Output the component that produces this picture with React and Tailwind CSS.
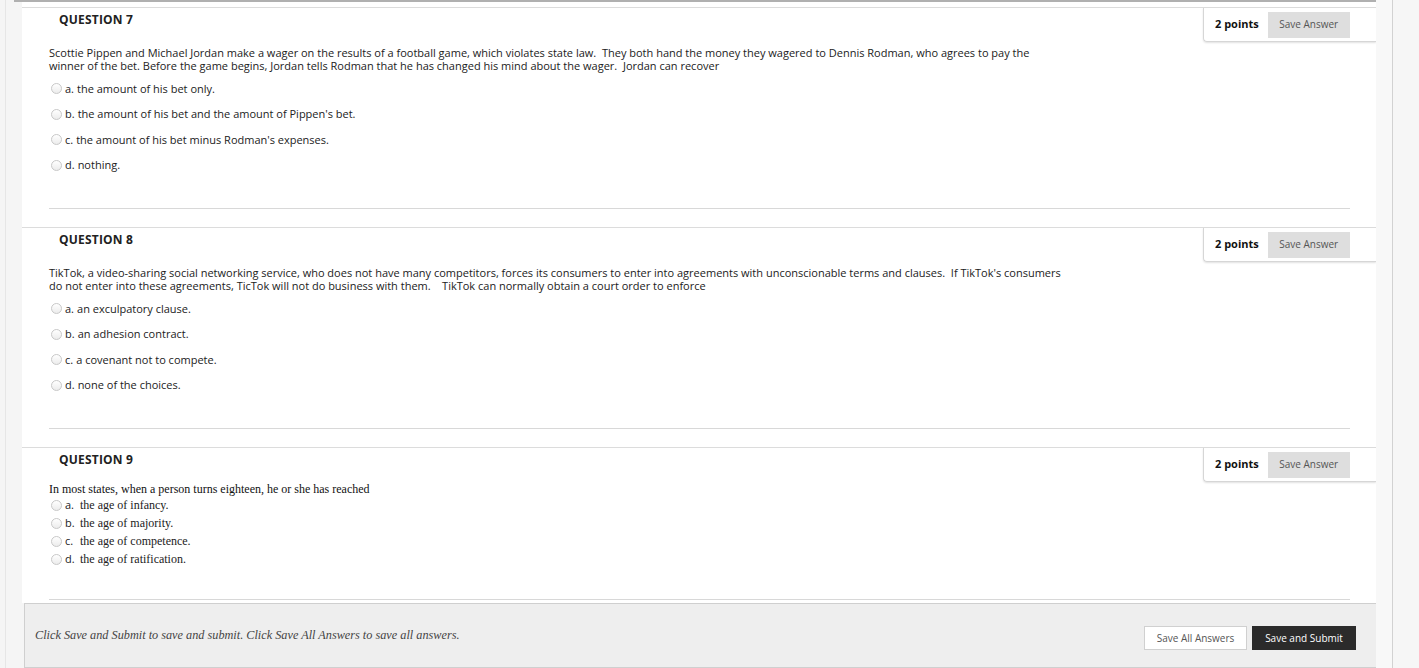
const questions = [
  {
    num: 7,
    lines: [
      'Scottie Pippen and Michael Jordan make a wager on the results of a football game, which violates state law.  They both hand the money they wagered to Dennis Rodman, who agrees to pay the',
      'winner of the bet. Before the game begins, Jordan tells Rodman that he has changed his mind about the wager.  Jordan can recover',
    ],
    options: [
      ['a.', 'the amount of his bet only.'],
      ['b.', "the amount of his bet and the amount of Pippen's bet."],
      ['c.', "the amount of his bet minus Rodman's expenses."],
      ['d.', 'nothing.'],
    ],
  },
  {
    num: 8,
    lines: [
      "TikTok, a video-sharing social networking service, who does not have many competitors, forces its consumers to enter into agreements with unconscionable terms and clauses.  If TikTok's consumers",
      'do not enter into these agreements, TicTok will not do business with them.    TikTok can normally obtain a court order to enforce',
    ],
    options: [
      ['a.', 'an exculpatory clause.'],
      ['b.', 'an adhesion contract.'],
      ['c.', 'a covenant not to compete.'],
      ['d.', 'none of the choices.'],
    ],
  },
];

const serifOptions = [
  ['a.', 'the age of infancy.'],
  ['b.', 'the age of majority.'],
  ['c.', 'the age of competence.'],
  ['d.', 'the age of ratification.'],
];

function Radio() {
  return (
    <span className="w-[11px] h-[11px] rounded-full border border-[#c8c8c8] bg-gradient-to-b from-white to-[#ececec] shrink-0" />
  );
}

function Header({ num }) {
  return (
    <div className="flex justify-between items-start h-[34px]">
      <h3 className="ml-[37px] mt-[3px] text-[12px] leading-[18px] font-bold text-[#222] tracking-[0.2px]">
        QUESTION {num}
      </h3>
      <div className="w-[173px] h-[34px] border-l border-b border-[#d6d6d6] rounded-bl-[4px] shadow-[0_1px_2px_rgba(0,0,0,0.12)] flex items-center pl-[11px] gap-[9px]">
        <span className="text-[11px] font-bold text-[#111]">2 points</span>
        <button className="w-[82px] h-[26px] bg-[#dedede] text-[10px] text-[#555]">Save Answer</button>
      </div>
    </div>
  );
}

function Question({ q }) {
  return (
    <div className="border-t border-[#dcdcdc] h-[220px]">
      <Header num={q.num} />
      <div className="pl-[27px] pr-[26px]">
        <p className="mt-[4px] text-[11px] leading-[13px] text-[#222] whitespace-pre">
          {q.lines[0]}
          <br />
          {q.lines[1]}
        </p>
        <div className="mt-[4px]">
          {q.options.map(([l, t]) => (
            <div key={l} className="h-[25.5px] flex items-center pl-[2px] text-[11px] text-[#222]">
              <Radio />
              <span className="ml-[3px]">{l}</span>
              <span className="ml-[3px]">{t}</span>
            </div>
          ))}
        </div>
        <div className="mt-[30px] border-t border-[#d8d8d8]" />
      </div>
    </div>
  );
}

export default function App() {
  return (
    <div className="h-[668px] overflow-hidden bg-[#f5f5f5] flex" style={{ fontFamily: '"Open Sans", sans-serif' }}>
      <div className="w-[22px] shrink-0 pl-[5px]">
        <div className="h-full border-l border-[#e6e6e6]" />
      </div>
      <div className="w-[1354px] shrink-0 flex flex-col">
        <div className="h-[2px] bg-[#b0b0b0] -ml-[8px] -mr-[7px]" />
        <div className="bg-white pt-[5px]">
          {questions.map((q) => (
            <Question key={q.num} q={q} />
          ))}
          <div className="border-t border-[#dcdcdc]">
            <Header num={9} />
            <div className="pl-[27px] pr-[26px]">
              <p className="text-[12px] leading-[14px] text-[#111]" style={{ fontFamily: '"Liberation Serif", serif' }}>
                In most states, when a person turns eighteen, he or she has reached
              </p>
              {serifOptions.map(([l, t]) => (
                <div key={l} className="h-[18px] flex items-center pl-[2px] text-[#222]">
                  <Radio />
                  <span className="ml-[3px] w-[15px] text-[11px]">{l}</span>
                  <span className="text-[12px]" style={{ fontFamily: '"Liberation Serif", serif' }}>{t}</span>
                </div>
              ))}
              <div className="mt-[31px] border-t border-[#d8d8d8]" />
            </div>
          </div>
          <div className="h-[3px]" />
        </div>
        <div className="flex-1 ml-[2px] -mr-[1px] bg-[#eeeeee] border border-[#cfcfcf] flex items-start justify-between pl-[10px] pr-[20px]">
          <p className="mt-[22px] text-[12.25px] italic text-[#444]" style={{ fontFamily: '"Liberation Serif", serif' }}>
            Click Save and Submit to save and submit. Click Save All Answers to save all answers.
          </p>
          <div className="mt-[22px] flex gap-[5px]">
            <button className="w-[103px] h-[24px] bg-white border border-[#d0d0d0] text-[10px] text-[#555]">Save All Answers</button>
            <button className="w-[104px] h-[24px] bg-[#2b2b2b] text-[10px] text-white">Save and Submit</button>
          </div>
        </div>
      </div>
      <div className="w-[16px] shrink-0 bg-[#f8f8f8]" />
      <div className="w-px shrink-0 bg-[#d2d2d2]" />
      <div className="flex-1 bg-[#f6f6f6]" />
    </div>
  );
}
